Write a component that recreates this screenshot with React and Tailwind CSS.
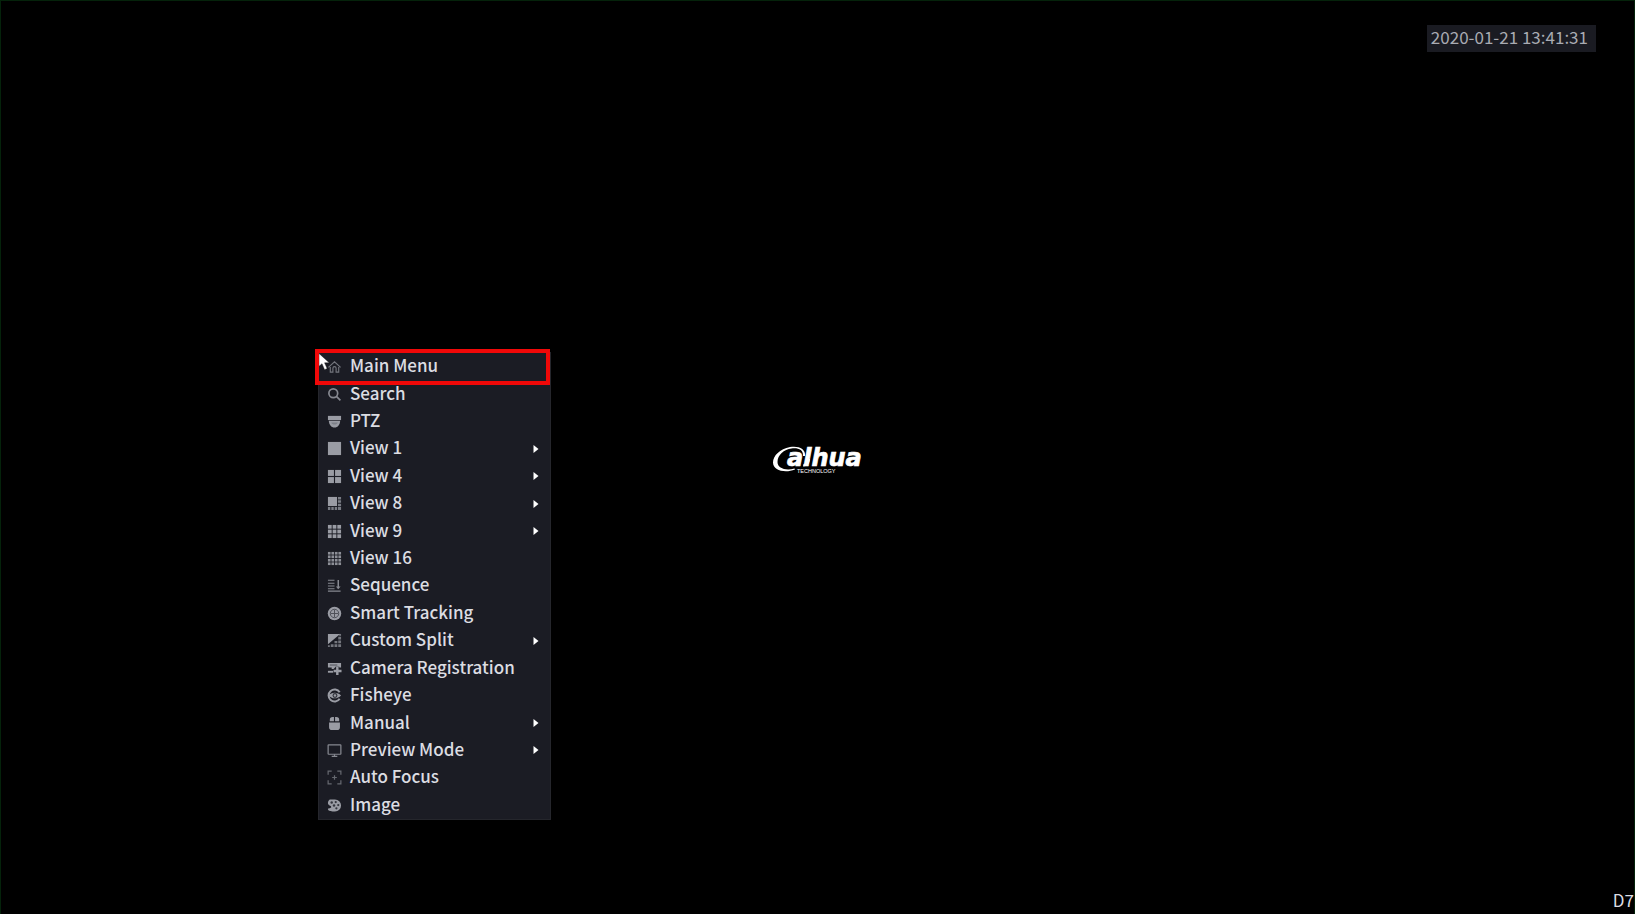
const grid = (n, gap) => {
  const size = (14 - gap * (n - 1)) / n;
  const cells = [];
  for (let r = 0; r < n; r++)
    for (let c = 0; c < n; c++)
      cells.push(
        <rect key={`${r}-${c}`} x={1 + c * (size + gap)} y={1 + r * (size + gap)} width={size} height={size} />
      );
  return cells;
};

const line = { fill: "none", stroke: "currentColor", strokeWidth: 1.4 };

const icons = {
  home: (
    <g {...line} strokeWidth="1.2" opacity="0.7">
      <path d="M1.500 9 8 3l6.500 6M3.500 8.500V14h2.800v-4.200a1.700 1.700 0 0 1 3.400 0V14h2.800V8.500" />
    </g>
  ),
  search: (
    <g {...line} strokeWidth="1.800" opacity="0.85">
      <circle cx="6.700" cy="6.700" r="4.700" />
      <path d="m10 10 4.300 4.300" />
    </g>
  ),
  ptz: (
    <g>
      <path d="M1 2h14v4.500H1z" />
      <path d="M2 7.200h12c0 4-2.500 7.300-6 7.300s-6-3.300-6-7.300z" />
      <path d="M4.500 9c.5 1.500 1.800 2.300 3.500 2.300s3-.8 3.500-2.300z" fill="#7d8088" />
    </g>
  ),
  view1: <rect x="1" y="1" width="14" height="14" />,
  view4: grid(2, 1.2),
  view8: (
    <g>
      <rect x="1" y="1" width="9.700" height="9.700" />
      <path d="M11.700 1H15v2.600h-3.300zM11.700 4.600H15v2.600h-3.300zM11.700 8.200H15v2.600h-3.300zM1 11.800h2.600V15H1zM4.600 11.800h2.600V15H4.600zM8.200 11.800h2.600V15H8.200zM11.700 11.800H15V15h-3.300z" opacity="0.75" />
    </g>
  ),
  view9: grid(3, 1),
  view16: <g opacity="0.9">{grid(4, 0.9)}</g>,
  sequence: (
    <g {...line} strokeWidth="1.100" opacity="0.85">
      <path d="M1 2.500h7M1 5.500h7M1 8.500h7M1 11.500h7M1 14h13.500" />
      <path d="M12 2v9" strokeWidth="1.600" />
      <path d="m9.500 9 2.500 3 2.500-3z" fill="currentColor" stroke="none" />
    </g>
  ),
  tracking: (
    <g>
      <circle cx="8" cy="8" r="7.200" />
      <g fill="none" stroke="#4b4d55" strokeWidth="1">
        <circle cx="8" cy="8" r="4.500" />
        <path d="M8 4v8M4 8h8" />
      </g>
    </g>
  ),
  split: (
    <g>
      <path d="M1 1h13L1 12z" />
      <path d="M12 4h3v3h-3zM12 8h3v3h-3zM12 12h3v3h-3zM8 8.500h3V11H8zM8 12h3v3H8zM4 12h3v3H4zM1 13h2v2H1z" opacity="0.7" />
      <path d="M13 1h2v2h-2z" opacity="0.7" />
    </g>
  ),
  camera: (
    <g>
      <path d="M1 2h14v5H8.500L7 8.500H5V7H1z" />
      <path d="M3 4.300h8" stroke="#4b4d55" strokeWidth="1" />
      <path d="M1 11.500h6" {...line} strokeWidth="2" />
      <path d="M11 6v9M6.500 10.500h9" stroke="#1b1c24" strokeWidth="4.200" />
      <path d="M11 6.500v8.500M7 10.700h8.500" stroke="currentColor" strokeWidth="2.600" />
    </g>
  ),
  fisheye: (
    <g>
      <path d="M13.500 4.500A6.400 6.400 0 1 0 13.500 11.500" {...line} strokeWidth="2.200" />
      <path d="M2 8c2.500-4 9.500-4 13 0-3.500 4-10.500 4-13 0z" />
      <circle cx="8.500" cy="8" r="2.600" fill="#34363e" />
      <circle cx="8.500" cy="8" r="1.300" />
    </g>
  ),
  manual: (
    <path d="M3 5.700V4a3 3 0 0 1 3-3h1.400v4.700zM8.600 5.700V1H10a3 3 0 0 1 3 3v1.700zM2.200 6.800h11.600V12a3 3 0 0 1-3 3H5.200a3 3 0 0 1-3-3z" />
  ),
  preview: (
    <g {...line} strokeWidth="1.300" opacity="0.85">
      <rect x="1.200" y="2" width="13.600" height="10" rx="0.500" />
      <path d="M8 12v2.300M5 14.300h6" />
    </g>
  ),
  focus: (
    <g {...line} strokeWidth="1.300" opacity="0.6">
      <path d="M1.200 5V1.200H5M11 1.200h3.800V5M14.800 11v3.800H11M5 14.800H1.200V11M8 5.500v5M5.500 8h5" />
    </g>
  ),
  image: (
    <g>
      <path d="M3 1.500h5.500a6.500 6.500 0 0 1 0 13C5 14.500 1.500 14 1 12c0-1.700 3.500-.8 3.500-2.500S1 8 1 5.500c0-1.700.5-3 2-4z" />
      <g fill="#34363e">
        <circle cx="5" cy="4.700" r="1.300" />
        <circle cx="9.300" cy="4.300" r="1.200" />
        <circle cx="12" cy="7.500" r="1.200" />
        <circle cx="7.500" cy="8" r="1.300" />
        <circle cx="10" cy="11" r="1.200" />
      </g>
    </g>
  ),
};

const items = [
  ["Main Menu", "home"],
  ["Search", "search"],
  ["PTZ", "ptz"],
  ["View 1", "view1", true],
  ["View 4", "view4", true],
  ["View 8", "view8", true],
  ["View 9", "view9", true],
  ["View 16", "view16"],
  ["Sequence", "sequence"],
  ["Smart Tracking", "tracking"],
  ["Custom Split", "split", true],
  ["Camera Registration", "camera"],
  ["Fisheye", "fisheye"],
  ["Manual", "manual", true],
  ["Preview Mode", "preview", true],
  ["Auto Focus", "focus"],
  ["Image", "image"],
];

function MenuItem({ label, icon, submenu }) {
  return (
    <li className="flex">
      <button type="button" aria-haspopup={submenu ? "menu" : undefined} className="flex w-full items-center gap-2 px-2 text-left">
        <svg viewBox="0 0 16 16" className="size-[15px] shrink-0 text-[#9a9ca4]" fill="currentColor" aria-hidden="true">
          {icons[icon]}
        </svg>
        <span className="grow pb-[3px] leading-6 whitespace-nowrap">{label}</span>
        {submenu && (
          <svg viewBox="0 0 6 8" className="mr-[3px] h-2 w-1.5 shrink-0 text-white" fill="currentColor" aria-hidden="true">
            <path d="M0.500 0 5.500 4 0.500 8z" />
          </svg>
        )}
      </button>
    </li>
  );
}

function Logo() {
  return (
    <svg viewBox="0 0 92 38" className="h-[38px] w-[92px] overflow-visible" fill="#fff" role="img" aria-label="Dahua Technology">
      <path
        d="M33 17C34 9.500 26 6.500 18 8C8 10 1 16.500 1 23.500C1 31.500 13 34.500 23 30.500L22.500 29.500C14 32 5.500 29.500 5.500 23C5.500 16 12 10.500 19.500 9.500C26 8.700 31.500 10.500 31 17Z"
      />
      <text
        x="15"
        y="27"
        fontFamily="'DejaVu Sans', sans-serif"
        fontWeight="700"
        fontStyle="italic"
        fontSize="24"
        stroke="#fff"
        strokeWidth="0.700"
      >
        alhua
      </text>
      <path d="M38 20c-.5 4.500-2.500 7.500-7 7.500l.6-2.500c2 0 3-1.500 3.400-5z" />
      <text x="25" y="34" fontFamily="'Liberation Sans', sans-serif" fontSize="5.500">TECHNOLOGY</text>
    </svg>
  );
}

export default function App() {
  return (
    <main className="relative flex min-h-screen flex-col justify-between border-x border-t border-[#04220a] bg-black font-['Noto_Sans_CJK_SC','Noto_Sans',sans-serif] text-[17px] text-[#dcdde2]">
      <header className="flex justify-end pt-6 pr-[38px]">
        <time className="bg-[#1a1b22] px-1 pr-2 pb-[3px] leading-6 text-[#a9abb2]">2020-01-21 13:41:31</time>
      </header>

      <div className="absolute inset-0 flex items-center justify-center">
        <Logo />
      </div>

      <nav aria-label="Shortcut menu" className="absolute top-[351px] left-[317px] w-[233px] border border-[#25262c] bg-[#1b1c24] font-medium">
        <ul className="grid h-[466px] auto-rows-fr">
          {items.map(([label, icon, submenu]) => (
            <MenuItem key={label} label={label} icon={icon} submenu={submenu} />
          ))}
        </ul>
        <div className="pointer-events-none absolute -top-1 -left-1 h-9 w-[235px] border-4 border-[#f00808]" />
        <svg viewBox="0 0 14 20" className="pointer-events-none absolute top-0 left-0 h-[18px] w-3" aria-hidden="true">
          <path d="M0 0v15l3.500-3 3 7 3-1.400-3-6.600H12z" fill="#fff" stroke="#111" strokeWidth="0.500" />
        </svg>
      </nav>

      <footer className="flex justify-end">
        <span className="leading-7">D7</span>
      </footer>
    </main>
  );
}
